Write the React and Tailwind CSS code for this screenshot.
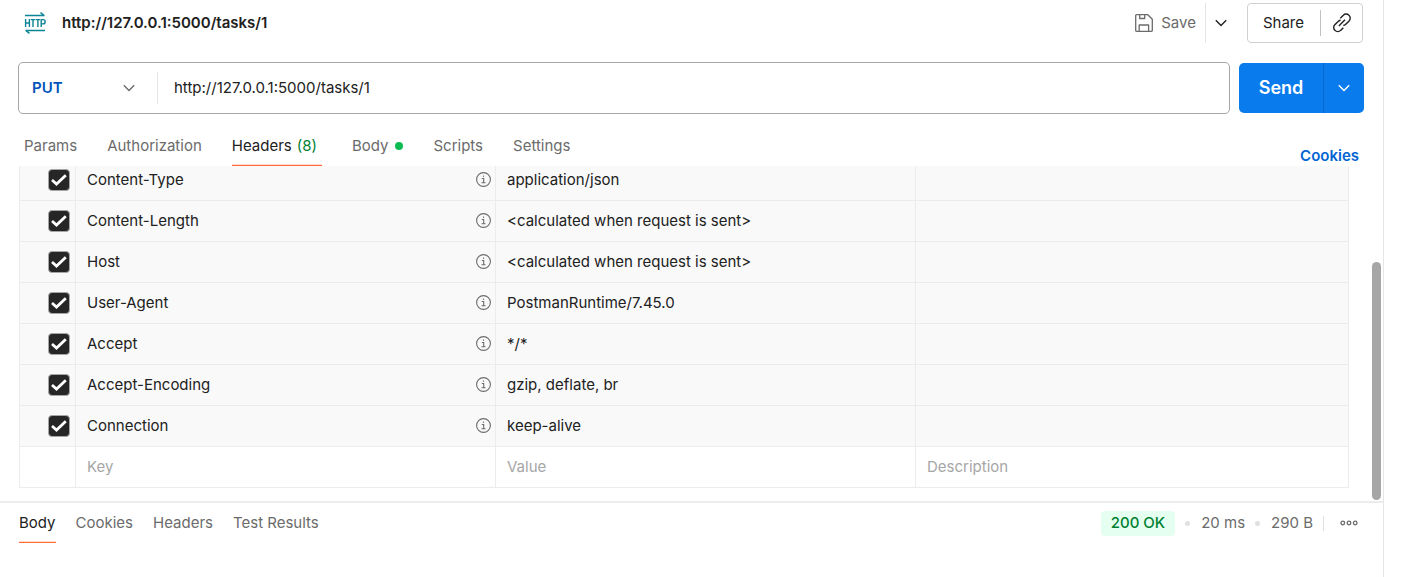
import React from "react";

const headers = [
  ["Content-Type", "application/json"],
  ["Content-Length", "<calculated when request is sent>"],
  ["Host", "<calculated when request is sent>"],
  ["User-Agent", "PostmanRuntime/7.45.0"],
  ["Accept", "*/*"],
  ["Accept-Encoding", "gzip, deflate, br"],
  ["Connection", "keep-alive"],
];

function HttpIcon() {
  return (
    <svg width="22" height="22" viewBox="0 0 22 22" fill="none" stroke="#0b8494" strokeWidth="1.5" aria-hidden="true">
      <path d="M1 3.500h19.500M16.500.7 20.300 3.500M21 18.500H1.500M5.500 21.300 1.700 18.500" />
      <path d="M1.600 7v8M5.400 7v8M1.600 11h3.800M6.800 7.600h4.400M9 7.600V15M11.800 7.600h4.200M13.900 7.600V15M17.200 15V7.600h1.800a2 2 0 0 1 0 4.300h-1.800" strokeWidth="1.400" />
    </svg>
  );
}

function Chevron({ className }) {
  return (
    <svg className={className} width="12" height="8" viewBox="0 0 12 8" fill="none" stroke="currentColor" strokeWidth="1.4" aria-hidden="true">
      <path d="M.8 1.200 6 6.400l5.200-5.200" />
    </svg>
  );
}

function SaveIcon() {
  return (
    <svg width="18" height="18" viewBox="0 0 18 18" fill="none" stroke="currentColor" strokeWidth="1.300" strokeLinejoin="round" aria-hidden="true">
      <path d="M1.500.7h11.300l4.500 4.500v11.300a.8.8 0 0 1-.8.8h-15a.8.8 0 0 1-.8-.8v-15a.8.8 0 0 1 .8-.8Z" />
      <path d="M4.700.9v3.600h5V.9M4.200 17v-6h9.400v6" />
    </svg>
  );
}

function LinkIcon() {
  return (
    <svg width="20" height="20" viewBox="0 0 20 20" fill="none" stroke="currentColor" strokeWidth="1.400" aria-hidden="true">
      <path d="m8.300 5.300 3-3a3.800 3.800 0 0 1 5.600 0 3.800 3.800 0 0 1 .2 5.600l-3.600 3.600a3.700 3.700 0 0 1-2.200 1" />
      <path d="m11.300 14.700-2.700 2.700a3.800 3.800 0 0 1-5.600 0 3.800 3.800 0 0 1-.2-5.600l3.600-3.600a3.700 3.700 0 0 1 2.200-1" />
      <path d="m6.800 13 6.200-6.200" />
    </svg>
  );
}

function InfoIcon() {
  return (
    <svg width="15" height="15" viewBox="0 0 15 15" fill="none" stroke="#6b6b6b" strokeWidth="1.100" aria-hidden="true">
      <circle cx="7.500" cy="7.500" r="6.900" />
      <path d="M5.800 6.500h1.900v4.200M5.500 10.700h4" />
      <path d="M6.900 4.200h1.200" strokeWidth="1.300" />
    </svg>
  );
}

function MoreIcon() {
  return (
    <svg width="18" height="6" viewBox="0 0 18 6" fill="none" stroke="currentColor" strokeWidth="1.300" aria-hidden="true">
      <circle cx="2.800" cy="3" r="1.800" />
      <circle cx="9" cy="3" r="1.800" />
      <circle cx="15.200" cy="3" r="1.800" />
    </svg>
  );
}

function Checkbox({ label }) {
  return (
    <span className="ml-auto grid size-[22px] place-items-center">
      <input
        type="checkbox"
        defaultChecked
        aria-label={label}
        className="peer col-start-1 row-start-1 size-[22px] appearance-none rounded border border-[#a6a6a6] bg-white checked:bg-[#262626]"
      />
      <svg className="pointer-events-none invisible col-start-1 row-start-1 peer-checked:visible" width="16" height="12" viewBox="0 0 16 12" fill="none" stroke="#fff" strokeWidth="2.800" aria-hidden="true">
        <path d="m1 6 4.500 4L14.800 1.300" />
      </svg>
    </span>
  );
}

function Tab({ active, children }) {
  return (
    <button
      type="button"
      role="tab"
      aria-selected={!!active}
      className={
        active
          ? "flex h-full items-center whitespace-nowrap border-b border-[#ff6c37] text-[#212121] shadow-[inset_0_-1px_0_#ffdacd]"
          : "flex h-full items-center whitespace-nowrap border-b border-transparent"
      }
    >
      {children}
    </button>
  );
}

export default function App() {
  return (
    <div className="min-h-screen bg-white pr-[17px] font-['Inter',sans-serif] text-[15px] leading-5 text-[#6b6b6b]">
      <main className="min-h-screen border-r border-[#e6e6e6]">
        <header className="flex h-[46px] items-center pl-6 pr-5">
          <HttpIcon />
          <h1 className="ml-4 font-semibold text-[#212121]">http://127.0.0.1:5000/tasks/1</h1>
          <div className="ml-auto flex items-center">
            <button type="button" className="flex items-center gap-2 pr-[9px]">
              <SaveIcon />
              Save
            </button>
            <button type="button" aria-label="Save options" className="flex h-10 w-8 items-center justify-center border-l border-[#e6e6e6] text-[#212121]">
              <Chevron />
            </button>
            <div className="ml-[10px] flex h-10 items-center rounded border border-[#d0d0d0] text-[#212121]">
              <button type="button" className="pl-[15px] pr-4">Share</button>
              <button type="button" aria-label="Copy link" className="flex h-[26px] w-[42px] items-center justify-center border-l border-[#c0c0c0]">
                <LinkIcon />
              </button>
            </div>
          </div>
        </header>

        <form className="flex items-center gap-[9px] pl-[18px] pr-[19px] pt-4" onSubmit={(e) => e.preventDefault()}>
          <div className="flex h-[52px] min-w-0 flex-1 items-center rounded-[5px] border border-[#a6a6a6]">
            <div className="grid h-8 w-[139px] shrink-0 items-center border-r border-[#e6e6e6]">
              <select aria-label="Method" defaultValue="PUT" className="col-start-1 row-start-1 h-full appearance-none bg-transparent pl-[13px] font-semibold text-[#0053b8] outline-none">
                <option>GET</option>
                <option>POST</option>
                <option>PUT</option>
                <option>DELETE</option>
              </select>
              <Chevron className="pointer-events-none col-start-1 row-start-1 mr-[22px] justify-self-end" />
            </div>
            <input aria-label="Request URL" defaultValue="http://127.0.0.1:5000/tasks/1" className="min-w-0 flex-1 bg-transparent px-4 text-[#212121] outline-none" />
          </div>
          <div className="flex h-[50px] overflow-hidden rounded-[5px] bg-[#097bed] text-white">
            <button type="submit" className="w-[84px] text-lg font-semibold">Send</button>
            <button type="button" aria-label="Send options" className="flex w-[41px] items-center justify-center border-l border-[#0768cb]">
              <Chevron />
            </button>
          </div>
        </form>

        <div className="flex h-[52px] items-end pl-6 pr-6">
          <div role="tablist" aria-label="Request" className="flex h-10 gap-[30px]">
            <Tab>Params</Tab>
            <Tab>Authorization</Tab>
            <Tab active>
              Headers<span className="ml-[5px] pr-[5px] text-[#007f31]">(8)</span>
            </Tab>
            <Tab>
              Body<span className="ml-[7px] size-2 rounded-full bg-[#0cbb52]" />
            </Tab>
            <Tab>Scripts</Tab>
            <Tab>Settings</Tab>
          </div>
          <a href="#cookies" className="ml-auto font-semibold text-[#0265d2]">Cookies</a>
        </div>

        <section className="flex overflow-hidden border-b-2 border-[#ececec] pl-[19px]" aria-label="Request headers">
          <table className="-mt-[7px] mb-[13px] w-full table-fixed border-collapse text-left text-[#212121]">
            <colgroup>
              <col className="w-14" />
              <col className="w-[420px]" />
              <col className="w-[420px]" />
              <col />
            </colgroup>
            <tbody>
              {headers.map(([key, value]) => (
                <tr key={key} className="h-[41px] bg-[#f9f9f9]">
                  <td className="border border-[#ececec] pr-[5px]">
                    <Checkbox label={key} />
                  </td>
                  <td className="border border-[#ececec] pl-[11px] pr-1">
                    <div className="flex items-start justify-between">
                      {key}
                      <span className="pt-[2px]">
                        <InfoIcon />
                      </span>
                    </div>
                  </td>
                  <td className="border border-[#ececec] pl-[11px]">{value}</td>
                  <td className="border border-[#ececec]" />
                </tr>
              ))}
              <tr className="h-[41px]">
                <td className="border border-[#ececec]" />
                {["Key", "Value", "Description"].map((name) => (
                  <td key={name} className="border border-[#ececec] pl-[11px]">
                    <input aria-label={name} placeholder={name} className="block w-full bg-transparent outline-none placeholder:text-[#a6a6a6]" />
                  </td>
                ))}
              </tr>
            </tbody>
          </table>
          <div className="ml-[23px] mr-[2px] flex w-[9px] shrink-0 flex-col justify-end pb-px">
            <div className="h-[238px] rounded-full bg-[#a6a6a6]" />
          </div>
        </section>

        <section className="flex h-10 items-center pl-[19px] pr-[25px]" aria-label="Response">
          <div role="tablist" aria-label="Response" className="flex h-full gap-5">
            <Tab active>Body</Tab>
            <Tab>Cookies</Tab>
            <Tab>Headers</Tab>
            <Tab>Test Results</Tab>
          </div>
          <div className="ml-auto flex items-center whitespace-nowrap">
            <span className="flex h-[25px] items-center rounded bg-[#e5fff1] px-[10px] font-medium text-[#007f31]">200 OK</span>
            <span className="ml-[10px] mr-[11px] size-[5px] rounded-full bg-[#e0e0e0]" />
            <span>20 ms</span>
            <span className="ml-[10px] mr-[11px] size-[5px] rounded-full bg-[#e0e0e0]" />
            <span>290 B</span>
            <span className="ml-[10px] mr-4 h-[15px] w-px bg-[#e0e0e0]" />
            <button type="button" aria-label="More actions">
              <MoreIcon />
            </button>
          </div>
        </section>
      </main>
    </div>
  );
}
